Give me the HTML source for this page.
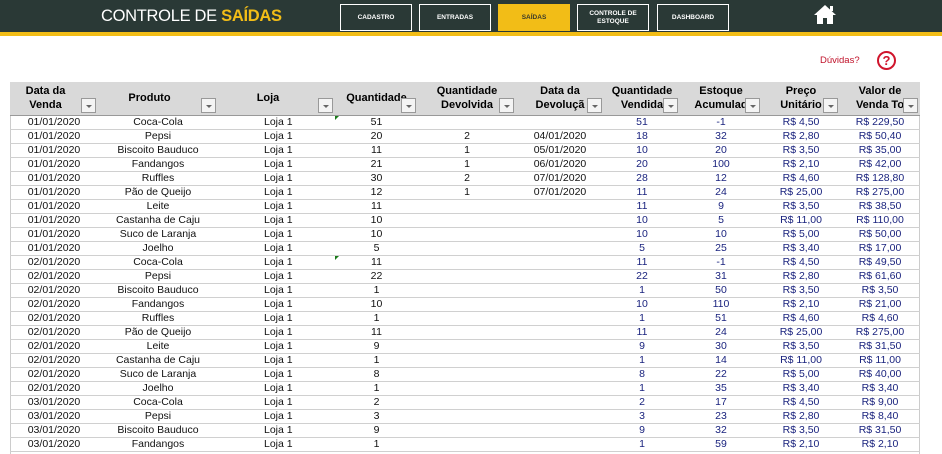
<!DOCTYPE html>
<html><head><meta charset="utf-8"><style>
*{margin:0;padding:0;box-sizing:border-box}
body{width:942px;height:454px;overflow:hidden;background:#fff;font-family:"Liberation Sans",sans-serif;position:relative}
.top{position:absolute;left:0;top:0;width:942px;height:32px;background:#2a3936}
.yel{position:absolute;left:0;top:32px;width:942px;height:4px;background:#f2bd17}
.title{position:absolute;left:101px;top:7px;color:#fff;font-size:16.5px;letter-spacing:-0.3px}
.title b{color:#f2bd17}
.nb{position:absolute;top:4px;height:27px;width:72px;border:1.5px solid #fff;color:#fff;font-size:6.5px;font-weight:bold;display:flex;align-items:center;justify-content:center;text-align:center;line-height:8px}
.duv{position:absolute;left:820px;top:55px;color:#c0122a;font-size:9.5px}
.q{position:absolute;left:877px;top:51px;width:19px;height:19px;border:2px solid #d0152c;border-radius:50%;color:#d0152c;font-weight:bold;font-size:13px;text-align:center;line-height:15px}
table{position:absolute;left:10px;top:82px;border-collapse:collapse;table-layout:fixed;width:910px}
th{height:33px;background:#d9d9d9;font-size:11px;font-weight:bold;color:#000;position:relative;padding:0;border-bottom:1px solid #999;line-height:14px;overflow:hidden;white-space:nowrap}
th span{position:absolute;top:2px;left:0;right:17px;text-align:center}
th i{position:absolute;right:2px;bottom:2px;width:15px;height:15px;background:#f4f4f4;border:1px solid #999}
th i:after{content:"";position:absolute;left:4px;top:6px;border-left:3px solid transparent;border-right:3px solid transparent;border-top:3px solid #666}
td{height:14px;font-size:10.5px;text-align:center;border-bottom:1px solid #d0d0d0;padding:0;line-height:13px;white-space:nowrap;color:#111}
td:nth-child(3){text-align:left;padding-left:46px}
td:nth-child(n+7){color:#1a237e}
.vl{position:absolute;left:10px;top:115px;width:1px;height:339px;background:#ccc}
.vr{position:absolute;left:919px;top:115px;width:1px;height:339px;background:#ccc}
</style></head><body>
<div class="top"></div><div class="yel"></div>
<div class="title">CONTROLE DE <b>SAÍDAS</b></div>
<div class="nb" style="left:340px">CADASTRO</div>
<div class="nb" style="left:419px">ENTRADAS</div>
<div class="nb" style="left:498px;background:#f2bd17;border-color:#f2bd17;color:#3a3a2a">SAÍDAS</div>
<div class="nb" style="left:577px">CONTROLE DE<br>ESTOQUE</div>
<div class="nb" style="left:657px">DASHBOARD</div>
<svg style="position:absolute;left:813px;top:4px" width="24" height="21" viewBox="0 0 24 21"><path d="M12 1 L1 11 L4 11 L4 20 L10 20 L10 14 L14 14 L14 20 L20 20 L20 11 L23 11 Z" fill="#fff"/><rect x="17" y="2" width="3" height="5" fill="#fff"/></svg>
<div class="duv">Dúvidas?</div><div class="q">?</div>
<div class="vl"></div><div class="vr"></div>
<table>
<colgroup><col style="width:88px"><col style="width:120px"><col style="width:117px"><col style="width:83px"><col style="width:98px"><col style="width:88px"><col style="width:76px"><col style="width:82px"><col style="width:78px"><col style="width:80px"></colgroup>
<tr>
<th><span>Data da<br>Venda</span><i></i></th>
<th><span style="top:9px">Produto</span><i></i></th>
<th><span style="top:9px">Loja</span><i></i></th>
<th><span style="top:9px;right:0">Quantidade</span><i></i></th>
<th><span style="right:0">Quantidade<br>Devolvida</span><i></i></th>
<th><span style="right:0">Data da<br>Devoluçã</span><i></i></th>
<th><span style="right:0">Quantidade<br>Vendida</span><i></i></th>
<th><span style="right:0">Estoque<br>Acumulad</span><i></i></th>
<th><span style="right:0">Preço<br>Unitário</span><i></i></th>
<th><span style="right:0">Valor de<br>Venda To</span><i></i></th>
</tr>
<tr><td>01/01/2020</td><td>Coca-Cola</td><td>Loja 1</td><td>51</td><td></td><td></td><td>51</td><td>-1</td><td>R$ 4,50</td><td>R$ 229,50</td></tr>
<tr><td>01/01/2020</td><td>Pepsi</td><td>Loja 1</td><td>20</td><td>2</td><td>04/01/2020</td><td>18</td><td>32</td><td>R$ 2,80</td><td>R$ 50,40</td></tr>
<tr><td>01/01/2020</td><td>Biscoito Bauduco</td><td>Loja 1</td><td>11</td><td>1</td><td>05/01/2020</td><td>10</td><td>20</td><td>R$ 3,50</td><td>R$ 35,00</td></tr>
<tr><td>01/01/2020</td><td>Fandangos</td><td>Loja 1</td><td>21</td><td>1</td><td>06/01/2020</td><td>20</td><td>100</td><td>R$ 2,10</td><td>R$ 42,00</td></tr>
<tr><td>01/01/2020</td><td>Ruffles</td><td>Loja 1</td><td>30</td><td>2</td><td>07/01/2020</td><td>28</td><td>12</td><td>R$ 4,60</td><td>R$ 128,80</td></tr>
<tr><td>01/01/2020</td><td>Pão de Queijo</td><td>Loja 1</td><td>12</td><td>1</td><td>07/01/2020</td><td>11</td><td>24</td><td>R$ 25,00</td><td>R$ 275,00</td></tr>
<tr><td>01/01/2020</td><td>Leite</td><td>Loja 1</td><td>11</td><td></td><td></td><td>11</td><td>9</td><td>R$ 3,50</td><td>R$ 38,50</td></tr>
<tr><td>01/01/2020</td><td>Castanha de Caju</td><td>Loja 1</td><td>10</td><td></td><td></td><td>10</td><td>5</td><td>R$ 11,00</td><td>R$ 110,00</td></tr>
<tr><td>01/01/2020</td><td>Suco de Laranja</td><td>Loja 1</td><td>10</td><td></td><td></td><td>10</td><td>10</td><td>R$ 5,00</td><td>R$ 50,00</td></tr>
<tr><td>01/01/2020</td><td>Joelho</td><td>Loja 1</td><td>5</td><td></td><td></td><td>5</td><td>25</td><td>R$ 3,40</td><td>R$ 17,00</td></tr>
<tr><td>02/01/2020</td><td>Coca-Cola</td><td>Loja 1</td><td>11</td><td></td><td></td><td>11</td><td>-1</td><td>R$ 4,50</td><td>R$ 49,50</td></tr>
<tr><td>02/01/2020</td><td>Pepsi</td><td>Loja 1</td><td>22</td><td></td><td></td><td>22</td><td>31</td><td>R$ 2,80</td><td>R$ 61,60</td></tr>
<tr><td>02/01/2020</td><td>Biscoito Bauduco</td><td>Loja 1</td><td>1</td><td></td><td></td><td>1</td><td>50</td><td>R$ 3,50</td><td>R$ 3,50</td></tr>
<tr><td>02/01/2020</td><td>Fandangos</td><td>Loja 1</td><td>10</td><td></td><td></td><td>10</td><td>110</td><td>R$ 2,10</td><td>R$ 21,00</td></tr>
<tr><td>02/01/2020</td><td>Ruffles</td><td>Loja 1</td><td>1</td><td></td><td></td><td>1</td><td>51</td><td>R$ 4,60</td><td>R$ 4,60</td></tr>
<tr><td>02/01/2020</td><td>Pão de Queijo</td><td>Loja 1</td><td>11</td><td></td><td></td><td>11</td><td>24</td><td>R$ 25,00</td><td>R$ 275,00</td></tr>
<tr><td>02/01/2020</td><td>Leite</td><td>Loja 1</td><td>9</td><td></td><td></td><td>9</td><td>30</td><td>R$ 3,50</td><td>R$ 31,50</td></tr>
<tr><td>02/01/2020</td><td>Castanha de Caju</td><td>Loja 1</td><td>1</td><td></td><td></td><td>1</td><td>14</td><td>R$ 11,00</td><td>R$ 11,00</td></tr>
<tr><td>02/01/2020</td><td>Suco de Laranja</td><td>Loja 1</td><td>8</td><td></td><td></td><td>8</td><td>22</td><td>R$ 5,00</td><td>R$ 40,00</td></tr>
<tr><td>02/01/2020</td><td>Joelho</td><td>Loja 1</td><td>1</td><td></td><td></td><td>1</td><td>35</td><td>R$ 3,40</td><td>R$ 3,40</td></tr>
<tr><td>03/01/2020</td><td>Coca-Cola</td><td>Loja 1</td><td>2</td><td></td><td></td><td>2</td><td>17</td><td>R$ 4,50</td><td>R$ 9,00</td></tr>
<tr><td>03/01/2020</td><td>Pepsi</td><td>Loja 1</td><td>3</td><td></td><td></td><td>3</td><td>23</td><td>R$ 2,80</td><td>R$ 8,40</td></tr>
<tr><td>03/01/2020</td><td>Biscoito Bauduco</td><td>Loja 1</td><td>9</td><td></td><td></td><td>9</td><td>32</td><td>R$ 3,50</td><td>R$ 31,50</td></tr>
<tr><td>03/01/2020</td><td>Fandangos</td><td>Loja 1</td><td>1</td><td></td><td></td><td>1</td><td>59</td><td>R$ 2,10</td><td>R$ 2,10</td></tr>
</table>
<div style="position:absolute;left:335px;top:116px;width:0;height:0;border-top:4px solid #1a7a1a;border-right:4px solid transparent"></div>
<div style="position:absolute;left:335px;top:256px;width:0;height:0;border-top:4px solid #1a7a1a;border-right:4px solid transparent"></div>
</body></html>
